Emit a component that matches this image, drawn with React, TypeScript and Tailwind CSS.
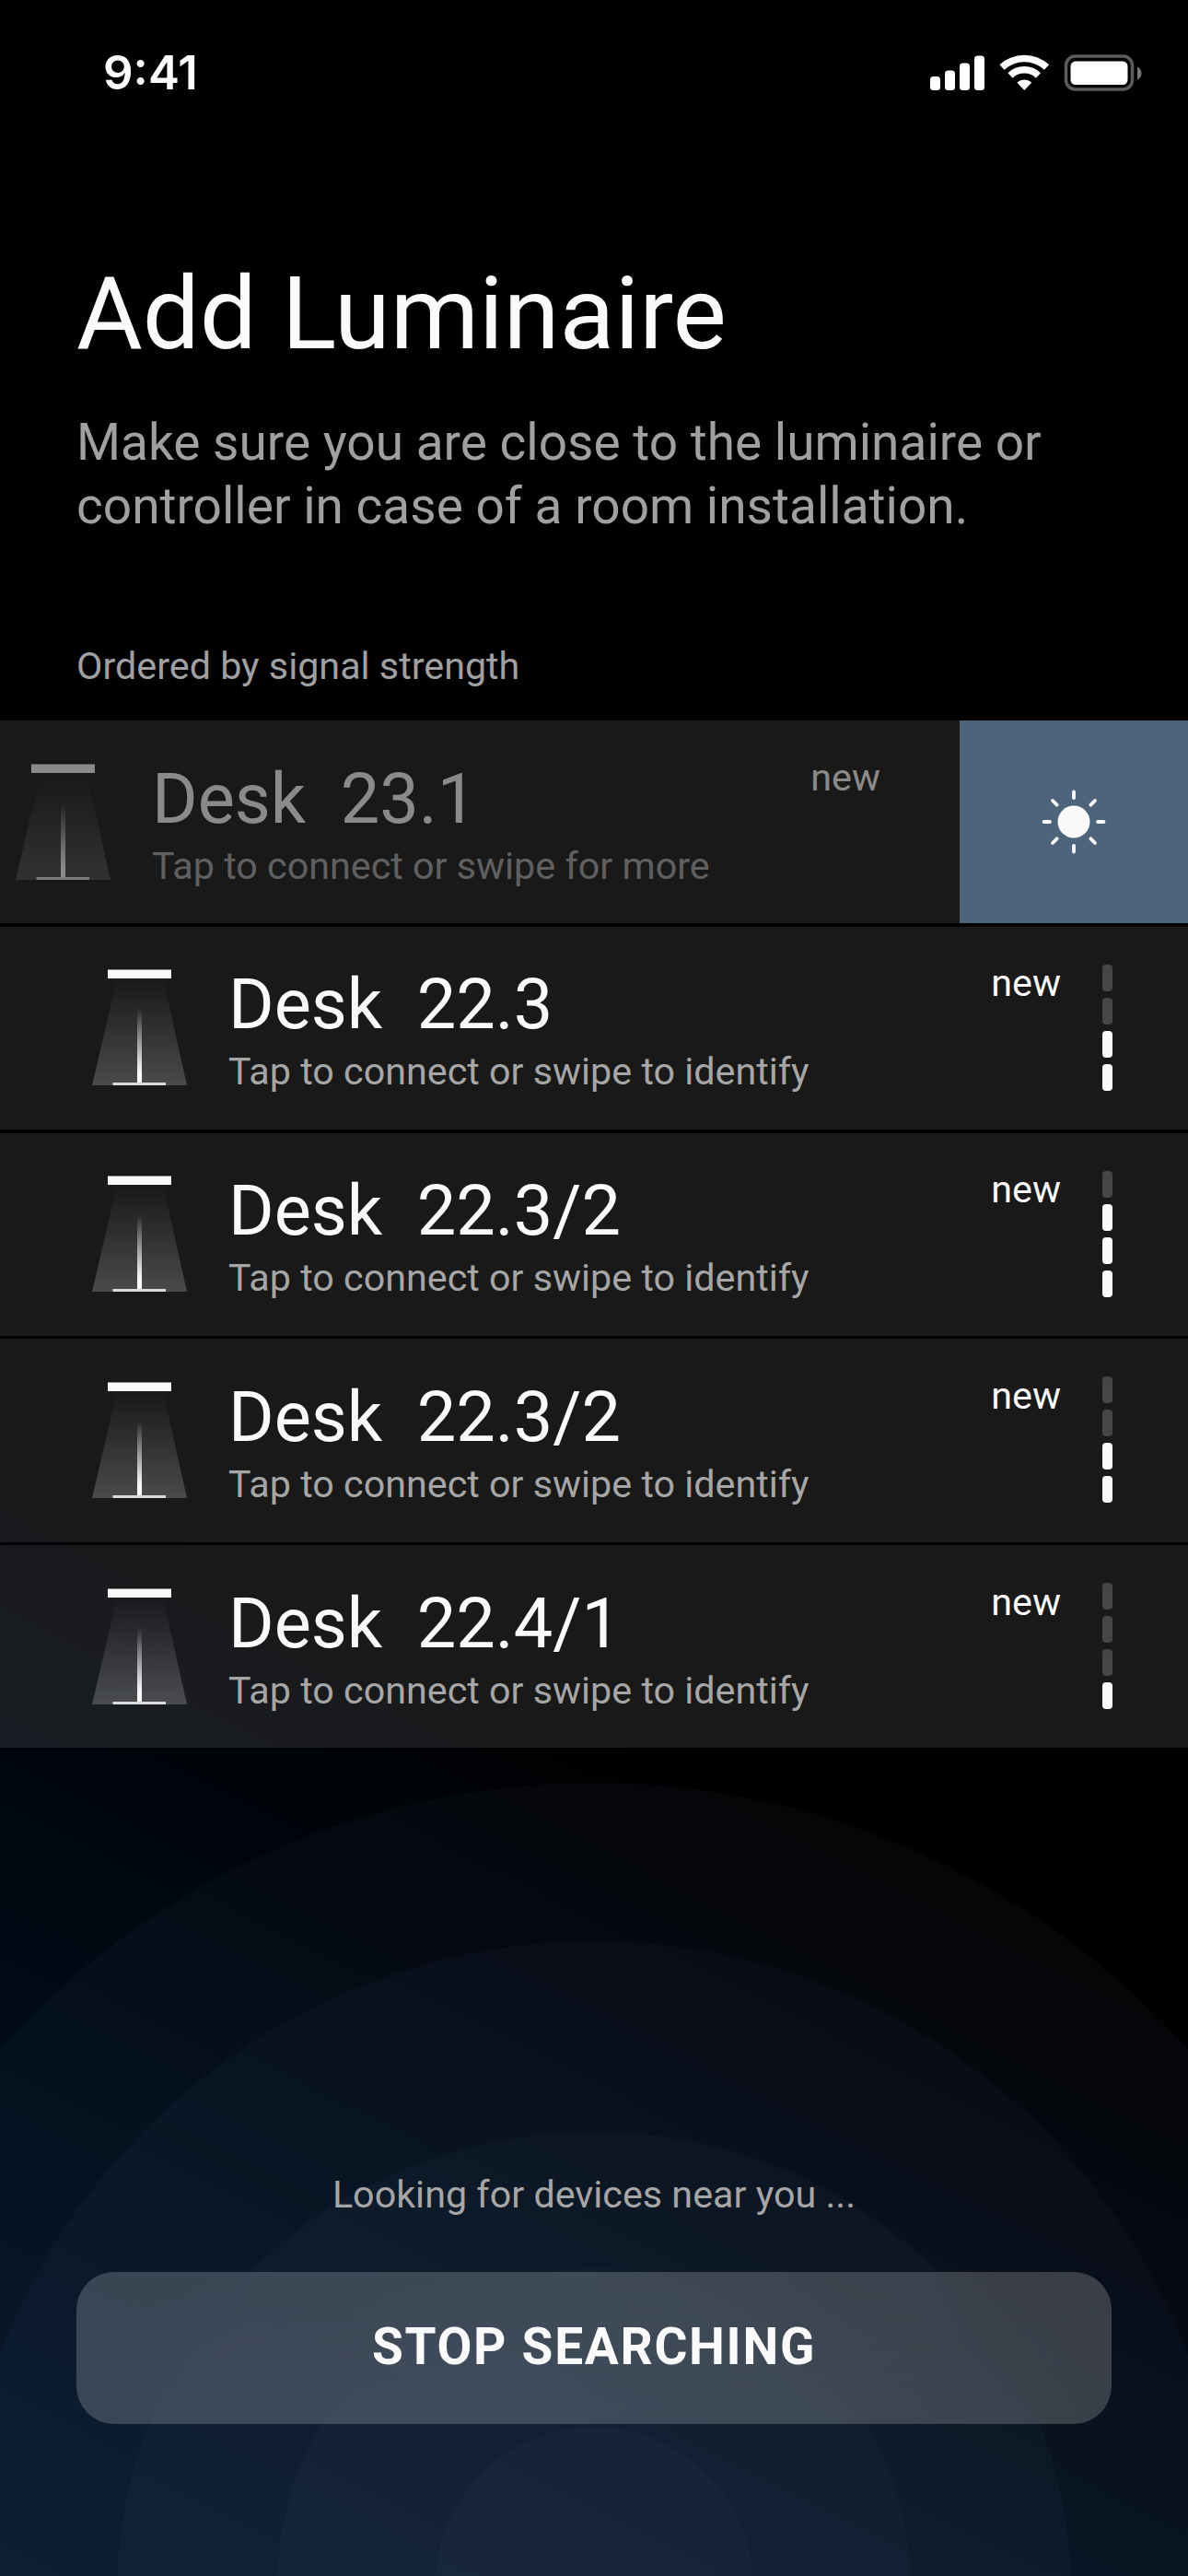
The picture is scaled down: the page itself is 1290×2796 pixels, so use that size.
import clsx from "clsx";

type Device = {
  name: string;
  signal: number;
};

const DEVICES: Device[] = [
  { name: "22.3", signal: 2 },
  { name: "22.3/2", signal: 3 },
  { name: "22.3/2", signal: 2 },
  { name: "22.4/1", signal: 1 },
];

const RINGS = [
  { rx: 867, ry: 871 },
  { rx: 691, ry: 699 },
  { rx: 517.5, ry: 492 },
  { rx: 344, ry: 344 },
  { rx: 172.5, ry: 172 },
];

function StatusBar() {
  return (
    <header className="flex h-[158px] items-start justify-between pt-[58px] pr-[50px] pl-[112px]">
      <span className="font-[Inter] text-[51px] leading-[42px] font-semibold text-white">9:41</span>
      <svg width="232" height="40" viewBox="0 0 232 40" className="mt-[1px]">
        <g fill="#fff">
          <rect x="2" y="24" width="11" height="15" rx="3.5" />
          <rect x="18" y="17.5" width="11" height="21.5" rx="3.5" />
          <rect x="34" y="9.5" width="11" height="29.5" rx="3.5" />
          <rect x="50" y="1.5" width="11" height="37.5" rx="3.5" />
        </g>
        <g fill="none" stroke="#fff" strokeWidth="7.5">
          <path d="M80 14A35.5 35.5 0 0 1 128.5 14" />
          <path d="M89 23A22 22 0 0 1 119.5 23" />
        </g>
        <path d="M104.3 39L96.3 30.5A12 12 0 0 1 112.3 30.5Z" fill="#fff" />
        <rect x="149.5" y="2" width="72" height="36" rx="10" fill="none" stroke="#5c5c5c" strokeWidth="3.5" />
        <rect x="154.5" y="7.5" width="62" height="25.5" rx="5.5" fill="#fff" />
        <path d="M227 13.5C233 16 233 25 227 27.5Z" fill="#777" />
      </svg>
    </header>
  );
}

function LampIcon() {
  return (
    <svg width="104" height="127" viewBox="0 0 104 127" className="shrink-0">
      <defs>
        <linearGradient id="beam" x1="0" y1="0" x2="0" y2="1">
          <stop offset="0" stopColor="#fafafa" stopOpacity="0" />
          <stop offset="1" stopColor="#fafafa" stopOpacity="0.22" />
        </linearGradient>
        <linearGradient id="pole" x1="0" y1="0" x2="0" y2="1">
          <stop offset="0" stopColor="#fafafa" stopOpacity="0" />
          <stop offset="0.85" stopColor="#fafafa" />
        </linearGradient>
      </defs>
      <path d="M27 10H77L103 126H0Z" fill="url(#beam)" />
      <rect x="17" y="0.5" width="69" height="9.5" fill="#fafafa" />
      <rect x="49" y="43" width="5" height="82" fill="url(#pole)" />
      <rect x="22.5" y="123" width="57.5" height="3" fill="#dcdcdc" />
    </svg>
  );
}

function SunIcon() {
  return (
    <svg width="70" height="70" viewBox="-35 -35 70 70">
      <circle r="17.5" fill="#fafafa" />
      {[0, 45, 90, 135, 180, 225, 270, 315].map((angle) => (
        <path key={angle} d="M0 -26V-32.5" stroke="#fafafa" strokeWidth="3.8" strokeLinecap="round" transform={`rotate(${angle})`} />
      ))}
    </svg>
  );
}

function SignalMeter({ signal }: { signal: number }) {
  return (
    <div className="mt-[41px] flex flex-col gap-[7px]">
      {[4, 3, 2, 1].map((level) => (
        <span key={level} className={clsx("h-[29px] w-[11px] rounded-[4px]", level <= signal ? "bg-[#fafafa]" : "bg-[#464646]")} />
      ))}
    </div>
  );
}

function DeviceInfo({ name, hint }: { name: string; hint: string }) {
  return (
    <div className="flex items-start pt-[46.5px]">
      <LampIcon />
      <div className="ml-[44px]">
        <h2 className="text-[75.68px] leading-[76px] whitespace-pre text-[#fafafa]">{`Desk  ${name}`}</h2>
        <p className="mt-[11px] text-[41.28px] leading-[48px] text-[#a6a6a6]">{hint}</p>
      </div>
    </div>
  );
}

export default function App() {
  return (
    <div className="relative isolate flex h-[2796px] w-[1290px] flex-col overflow-hidden bg-black font-[Roboto,sans-serif]">
      <div className="absolute inset-0 -z-10 bg-[linear-gradient(27deg,#051628_0%,#030f20_10%,#010d1a_15%,#000a14_20%,#00050c_27%,#000000_37%)]" />
      <svg className="absolute bottom-0 left-0 -z-10" width="1290" height="861" viewBox="0 0 1290 861">
        {RINGS.map(({ rx, ry }) => (
          <ellipse key={rx} cx="645" cy="871" rx={rx} ry={ry} fill="#7c90b0" fillOpacity="0.044" />
        ))}
      </svg>

      <StatusBar />

      <section className="px-[83px] pt-[118px]">
        <h1 className="text-[110px] leading-[130px] text-[#fafafa]">Add Luminaire</h1>
        <p className="mt-[40px] text-[55px] leading-[69px] text-[#a0a0a0]">
          Make sure you are close to the luminaire or
          <br />
          controller in case of a room installation.
        </p>
        <p className="mt-[115px] text-[41.28px] leading-[48px] text-[#a0a0a0]">Ordered by signal strength</p>
      </section>

      <ul className="mt-[35px] flex flex-col gap-[3.5px]">
        <li className="flex h-[220.3px] bg-[#191919]">
          <div className="flex flex-1 justify-between pr-[86px] pl-[17px] opacity-50">
            <DeviceInfo name="23.1" hint="Tap to connect or swipe for more" />
            <span className="mt-[37.5px] text-[41.28px] leading-[48px] text-[#fafafa]">new</span>
          </div>
          <button className="flex w-[248px] items-center justify-center bg-[#4d647b]">
            <SunIcon />
          </button>
        </li>
        {DEVICES.map((device, i) => (
          <li key={i} className="flex h-[220.3px] bg-[#fafafa]/10 pr-[82px] pl-[100px]">
            <DeviceInfo name={device.name} hint="Tap to connect or swipe to identify" />
            <span className="mt-[37.5px] mr-[45px] ml-auto text-[41.28px] leading-[48px] text-[#fafafa]">new</span>
            <SignalMeter signal={device.signal} />
          </li>
        ))}
      </ul>

      <footer className="mt-auto flex flex-col items-center px-[83px] pb-[165px]">
        <p className="text-[41.28px] leading-[48px] text-[#a6a6a6]">Looking for devices near you ...</p>
        <button className="mt-[60px] h-[165px] w-full rounded-[41px] bg-[#fafafa]/20 pb-[3px] text-[55px] font-bold tracking-[1.7px] text-[#fafafa] backdrop-blur-2xl">
          STOP SEARCHING
        </button>
      </footer>
    </div>
  );
}
